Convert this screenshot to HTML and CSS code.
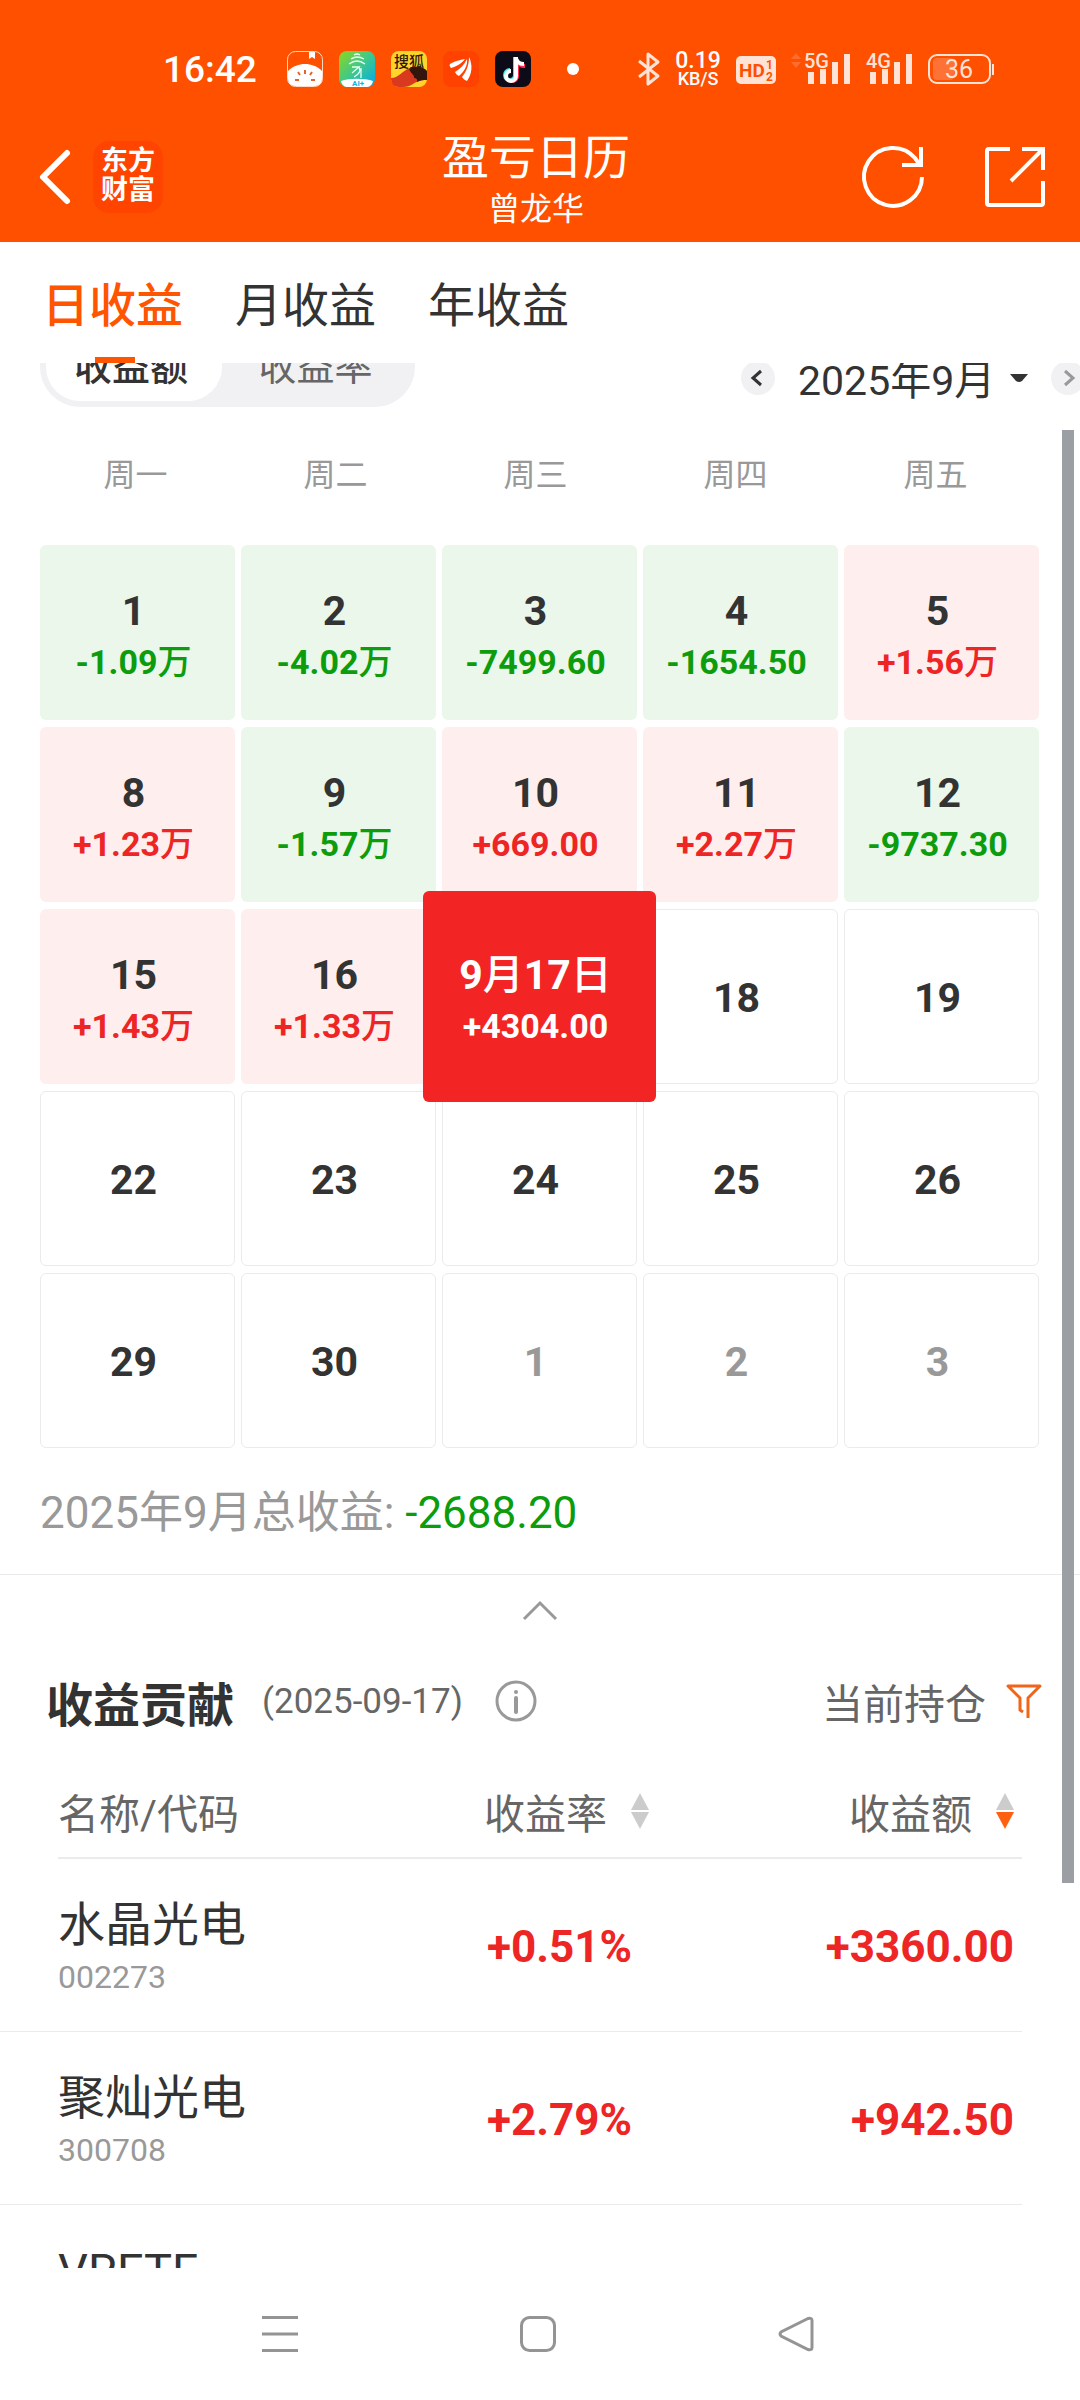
FILE: index.html
```html
<!DOCTYPE html>
<html lang="zh-CN">
<head>
    <meta charset="UTF-8">
    <meta name="viewport" content="width=device-width, initial-scale=1.0">
    <title>盈亏日历</title>
    <link rel="stylesheet" href="styles.css">
</head>
<body>
    <!-- Status Bar -->
    <div class="status-bar">
        <div class="status-left">
            <span class="clock">16:42</span>
            <svg class="app-icon" viewBox="0 0 36 36">
                <rect x="0.5" y="0.5" width="35" height="35" rx="8" fill="#ff5000" stroke="#ffd9c8"/>
                <path d="M22 1h6v7l-3-2-3 2z" fill="#fff"/>
                <path d="M1 20C6 15 12 13 18 13s12 2 17 7v8a7 7 0 0 1-7 7H8a7 7 0 0 1-7-7z" fill="#fff"/>
                <path d="M18 19v4M11 21l2 3M25 21l-2 3M8 29h4M24 29h4" stroke="#e8622c" stroke-width="2" fill="none"/>
            </svg>
            <svg class="app-icon" viewBox="0 0 36 36">
                <defs>
                    <linearGradient id="leaf" x1="0" y1="0" x2="1" y2="1">
                        <stop offset="0" stop-color="#8ed61c"/>
                        <stop offset="0.5" stop-color="#3ec88c"/>
                        <stop offset="1" stop-color="#00a8f0"/>
                    </linearGradient>
                </defs>
                <rect width="36" height="36" rx="8" fill="url(#leaf)"/>
                <path d="M2 30c8-3 24-3 32 0-1 4-3 6-7 6H9c-4 0-6-2-7-6z" fill="#fff"/>
                <path d="M15 4q3-2 6 0M12 8q6-4 13 0M10 13q8-6 16 0M13 16h7l-7 6M20 16q3 6-5 10M22 17v10" stroke="#e9fff5" stroke-width="1.3" fill="none"/>
                <text x="13" y="35" class="tiny-ai">AI+</text>
            </svg>
            <svg class="app-icon" viewBox="0 0 36 36">
                <rect width="36" height="36" rx="8" fill="#ffd52b"/>
                <path d="M0 27c8 0 12-8 19-10 9-2 16 1 17 4v7c-6 2-10 2-14 5-3 2-6 3-10 3H8c-5 0-8-3-8-9z" fill="#d8391f"/>
                <path d="M18 18c7-4 15-2 18 2v9c-4 0-7 0-10 2 1-3-1-4-3-4 1-3-3-4-5-9z" fill="#32150c"/>
                <text x="3" y="16" class="tiny-sohu">搜狐</text>
            </svg>
            <svg class="app-icon" viewBox="0 0 36 36">
                <rect width="36" height="36" rx="8" fill="#ff4200"/>
                <path d="M7 13c5-3 10-4 15-5-3 4-7 7-14 9-1-1-2-3-1-4zM12 21c5-3 9-7 12-13 1 6-3 13-8 17-2-1-3-2-4-4zM19 26c4-5 7-11 7-20 4 8 3 17-2 24-2-1-4-2-5-4z" fill="#fff"/>
            </svg>
            <svg class="app-icon" viewBox="0 0 36 36">
                <rect width="36" height="36" rx="8" fill="#0d0b18"/>
                <path d="M20 6v18a5 5 0 1 1-5-5" stroke="#25f4ee" stroke-width="4" fill="none"/>
                <path d="M22 8v18a5 5 0 0 1-8 3M22 9q2 6 8 6" stroke="#fe2c55" stroke-width="4" fill="none"/>
                <path d="M21 6v19a5 5 0 1 1-5-5M21 7q1 6 8 6" stroke="#fff" stroke-width="4" fill="none"/>
            </svg>
            <span class="dot"></span>
        </div>
        <div class="status-right">
            <svg width="22" height="36" viewBox="0 0 22 36">
                <path d="M1 10l19 15-10 8V3l10 8L1 26" fill="none" stroke="#ffe3d6" stroke-width="3" stroke-linejoin="round"/>
            </svg>
            <div class="net-speed"><span>0.19</span><small>KB/S</small></div>
            <svg width="40" height="36" viewBox="0 0 40 36">
                <rect y="5" width="40" height="28" rx="5" fill="#ffe3d6"/>
                <text x="3" y="26" class="hd-text">HD</text>
                <text x="30" y="18" class="hd-num">1</text>
                <text x="30" y="30" class="hd-num">2</text>
            </svg>
            <svg width="60" height="36" viewBox="0 0 60 36">
                <path d="M0 8l5-6 5 6zM0 11l5 6 5-6z" fill="#ff6e30"/>
                <text x="13" y="17" class="sig-text">5G</text>
                <path d="M17 21h6v12h-6zM29 18h6v15h-6zM41 11h6v22h-6zM53 3h6v30h-6z" fill="#ffe3d6"/>
            </svg>
            <svg width="47" height="36" viewBox="0 0 47 36">
                <text x="0" y="17" class="sig-text">4G</text>
                <path d="M4 21h6v12H4zM16 18h6v15h-6zM28 11h6v22h-6zM40 3h6v30h-6z" fill="#ffe3d6"/>
            </svg>
            <svg width="67" height="36" viewBox="0 0 67 36">
                <rect x="5" y="7" width="21" height="22" rx="4" fill="#ff7236"/>
                <rect x="1" y="4" width="61" height="28" rx="8" fill="none" stroke="#ffe3d6" stroke-width="2"/>
                <path d="M65 13v11" stroke="#ffe3d6" stroke-width="2"/>
                <text x="31" y="27" text-anchor="middle" class="bat-text">36</text>
            </svg>
        </div>
    </div>

    <!-- Top Header -->
    <header class="top-header">
        <div class="header-left">
            <button class="icon-btn" aria-label="返回">
                <svg width="32" height="56" viewBox="0 0 32 56"><path d="M28 4L4 28l24 24" fill="none" stroke="#fff" stroke-width="6" stroke-linecap="round" stroke-linejoin="round"/></svg>
            </button>
            <a href="#" class="brand">东方<br>财富</a>
        </div>
        <div class="header-title">
            <h1>盈亏日历</h1>
            <p>曾龙华</p>
        </div>
        <div class="header-right">
            <button class="icon-btn" aria-label="刷新">
                <svg width="64" height="64" viewBox="0 0 64 64" fill="none" stroke="#fff" stroke-width="4">
                    <path d="M61 32a29 29 0 1 1-7-19l5 7"/>
                    <path d="M60 2v18H41"/>
                </svg>
            </button>
            <button class="icon-btn" aria-label="分享">
                <svg width="60" height="60" viewBox="0 0 60 60" fill="none" stroke="#fff" stroke-width="4">
                    <path d="M25 2H4a2 2 0 0 0-2 2v52a2 2 0 0 0 2 2h52a2 2 0 0 0 2-2V34"/>
                    <path d="M37 2h21v21M57 3L26 34"/>
                </svg>
            </button>
        </div>
    </header>

    <!-- Period Tabs -->
    <nav class="tabs">
        <a href="#day" class="tab active">日收益</a>
        <a href="#month" class="tab">月收益</a>
        <a href="#year" class="tab">年收益</a>
    </nav>

    <!-- Scrolling Content -->
    <main class="content">
        <div class="scroll-thumb"></div>

        <div class="toolbar">
            <div class="segment">
                <button class="segment-btn active">收益额</button>
                <button class="segment-btn">收益率</button>
            </div>
            <div class="month-nav">
                <button class="round-btn" aria-label="上个月">
                    <svg width="34" height="34" viewBox="0 0 34 34"><path d="M20 10l-8 7 8 7" fill="none" stroke="#333" stroke-width="3"/></svg>
                </button>
                <label class="month-pick">
                    <select aria-label="月份">
                        <option>2025年9月</option>
                    </select>
                    <svg width="18" height="10" viewBox="0 0 18 10"><path d="M0 1h18l-6 7q-3 2-6 0z" fill="#333"/></svg>
                </label>
                <button class="round-btn" aria-label="下个月">
                    <svg width="34" height="34" viewBox="0 0 34 34"><path d="M14 10l8 7-8 7" fill="none" stroke="#999" stroke-width="3"/></svg>
                </button>
            </div>
        </div>

        <!-- Calendar -->
        <section class="calendar">
            <div class="weekdays">
                <span>周一</span><span>周二</span><span>周三</span><span>周四</span><span>周五</span>
            </div>
            <div class="days">
                <button class="day loss"><b>1</b><span>-1.09<i>万</i></span></button>
                <button class="day loss"><b>2</b><span>-4.02<i>万</i></span></button>
                <button class="day loss"><b>3</b><span>-7499.60</span></button>
                <button class="day loss"><b>4</b><span>-1654.50</span></button>
                <button class="day gain"><b>5</b><span>+1.56<i>万</i></span></button>

                <button class="day gain"><b>8</b><span>+1.23<i>万</i></span></button>
                <button class="day loss"><b>9</b><span>-1.57<i>万</i></span></button>
                <button class="day gain"><b>10</b><span>+669.00</span></button>
                <button class="day gain"><b>11</b><span>+2.27<i>万</i></span></button>
                <button class="day loss"><b>12</b><span>-9737.30</span></button>

                <button class="day gain"><b>15</b><span>+1.43<i>万</i></span></button>
                <button class="day gain"><b>16</b><span>+1.33<i>万</i></span></button>
                <button class="day selected"><b>9<i>月</i>17<i>日</i></b><span>+4304.00</span></button>
                <button class="day"><b>18</b></button>
                <button class="day"><b>19</b></button>

                <button class="day"><b>22</b></button>
                <button class="day"><b>23</b></button>
                <button class="day"><b>24</b></button>
                <button class="day"><b>25</b></button>
                <button class="day"><b>26</b></button>

                <button class="day"><b>29</b></button>
                <button class="day"><b>30</b></button>
                <button class="day other"><b>1</b></button>
                <button class="day other"><b>2</b></button>
                <button class="day other"><b>3</b></button>
            </div>
            <p class="total">2025年9月总收益: <span>-2688.20</span></p>
        </section>

        <button class="collapse" aria-label="收起">
            <svg width="36" height="20" viewBox="0 0 36 20"><path d="M2 18L18 2l16 16" fill="none" stroke="#999" stroke-width="3"/></svg>
        </button>

        <!-- Contribution List -->
        <section class="contrib">
            <div class="contrib-head">
                <h2>收益贡献</h2>
                <span class="date">(2025-09-17)</span>
                <button class="icon-btn" aria-label="说明">
                    <svg width="42" height="42" viewBox="0 0 42 42">
                        <circle cx="21" cy="21" r="19" fill="none" stroke="#999" stroke-width="3"/>
                        <circle cx="21" cy="12" r="2" fill="#999"/>
                        <path d="M21 18v14" stroke="#999" stroke-width="4" stroke-linecap="round"/>
                    </svg>
                </button>
                <button class="filter">当前持仓
                    <svg width="36" height="36" viewBox="0 0 36 36"><path d="M17 29l-3-2V15L2 3h32L22 15v20" fill="none" stroke="#f26419" stroke-width="3" stroke-linejoin="round"/></svg>
                </button>
            </div>
            <table>
                <thead>
                    <tr>
                        <th>名称/代码</th>
                        <th>
                            <button class="sort">收益率
                                <svg width="18" height="36" viewBox="0 0 18 36"><path d="M9 0l9 17H0z" fill="#ccc"/><path d="M9 36l9-17H0z" fill="#ccc"/></svg>
                            </button>
                        </th>
                        <th>
                            <button class="sort">收益额
                                <svg width="18" height="36" viewBox="0 0 18 36"><path d="M9 0l9 17H0z" fill="#ccc"/><path d="M9 36l9-17H0z" fill="#ff6010"/></svg>
                            </button>
                        </th>
                    </tr>
                </thead>
                <tbody>
                    <tr>
                        <td><div class="name">水晶光电</div><div class="code">002273</div></td>
                        <td>+0.51%</td>
                        <td>+3360.00</td>
                    </tr>
                    <tr>
                        <td><div class="name">聚灿光电</div><div class="code">300708</div></td>
                        <td>+2.79%</td>
                        <td>+942.50</td>
                    </tr>
                    <tr>
                        <td><div class="name">VRETF</div></td>
                        <td></td>
                        <td></td>
                    </tr>
                </tbody>
            </table>
        </section>
    </main>

    <!-- System Navigation -->
    <footer class="system-nav">
        <button class="icon-btn" aria-label="菜单">
            <svg width="36" height="36" viewBox="0 0 36 36"><path d="M0 1.5h36M0 18h36M0 34.5h36" stroke="#949494" stroke-width="3"/></svg>
        </button>
        <button class="icon-btn" aria-label="主页">
            <svg width="36" height="36" viewBox="0 0 36 36"><rect x="1.5" y="1.5" width="33" height="33" rx="8" fill="none" stroke="#949494" stroke-width="3"/></svg>
        </button>
        <button class="icon-btn" aria-label="后退">
            <svg width="36" height="36" viewBox="0 0 36 36"><path d="M30 2.500L3 16q-2 2 0 4l27 13.500q4 1 4-2v-27q0-3-4-2z" fill="none" stroke="#949494" stroke-width="3"/></svg>
        </button>
    </footer>
</body>
</html>
```

FILE: styles.css
```css
/* Global Styles */
* {
    box-sizing: border-box;
}

body {
    font-family: Roboto, 'Noto Sans CJK SC', sans-serif;
    margin: 0;
    height: 100vh;
    display: flex;
    flex-direction: column;
    background-color: #fff;
    color: #333;
    overflow: hidden;
}

h1, h2, p {
    margin: 0;
    font-weight: 400;
}

a {
    text-decoration: none;
}

button, select {
    font: inherit;
    color: inherit;
    border: none;
    background: none;
    padding: 0;
    cursor: pointer;
}

svg {
    display: block;
    flex: none;
    overflow: visible;
}

.icon-btn {
    display: flex;
}

/* Status Bar */
.status-bar {
    display: flex;
    justify-content: space-between;
    padding: 51px 85px 25px 163px;
    background-color: #ff5000;
    color: #fff;
}

.status-left, .status-right {
    display: flex;
    align-items: center;
    height: 36px;
}

.status-left {
    gap: 16px;
}

.status-right {
    gap: 15px;
}

.clock {
    font-size: 37px;
    font-weight: 500;
    margin-right: 14px;
}

.app-icon {
    width: 36px;
    height: 36px;
}

.dot {
    width: 12px;
    height: 12px;
    margin-left: 20px;
    border-radius: 50%;
    background-color: #fff;
}

.net-speed {
    width: 46px;
    text-align: center;
    font-weight: 500;
}

.net-speed span, .net-speed small {
    display: block;
    font-size: 23px;
    line-height: 20px;
}

.net-speed small {
    font-size: 18px;
    line-height: 16px;
}

.tiny-ai {
    font-size: 8px;
    font-weight: 700;
    fill: #18b0d8;
}

.tiny-sohu {
    font-size: 15px;
    font-weight: 500;
    fill: #32150c;
}

.hd-text {
    font-size: 19px;
    font-weight: 700;
    fill: #ff5000;
}

.hd-num {
    font-size: 12px;
    font-weight: 700;
    fill: #ff5000;
}

.sig-text {
    font-size: 20px;
    font-weight: 500;
    fill: #ffe3d6;
}

.bat-text {
    font-size: 25px;
    fill: #ffe3d6;
}

/* Top Header */
.top-header {
    display: grid;
    grid-template-columns: 1fr auto 1fr;
    align-items: center;
    height: 130px;
    padding: 0 35px 0 39px;
    background-color: #ff5000;
    color: #fff;
}

.header-left, .header-right {
    display: flex;
    align-items: center;
}

.header-left {
    gap: 22px;
}

.header-right {
    justify-content: flex-end;
    gap: 60px;
}

.brand {
    padding: 6px 8px 8px;
    border-radius: 16px;
    background-color: #ff4400;
    color: #fff;
    font-size: 27px;
    font-weight: 700;
    line-height: 29px;
}

.header-title {
    padding: 12px 12px 0 0;
    text-align: center;
}

.header-title h1 {
    font-size: 47px;
    line-height: 52px;
}

.header-title p {
    font-size: 32px;
    line-height: 50px;
}

/* Tabs */
.tabs {
    display: flex;
    gap: 52px;
    height: 121px;
    padding-left: 42px;
}

.tab {
    position: relative;
    color: #333;
    font-size: 47px;
    line-height: 128px;
}

.tab.active {
    color: #ff5500;
    font-weight: 500;
}

.tab.active::after {
    content: "";
    position: absolute;
    left: 50%;
    bottom: 0;
    width: 40px;
    height: 6px;
    margin-left: -18px;
    background-color: #ff5500;
}

/* Scrolling Content */
.content {
    position: relative;
    flex: 1;
    min-height: 0;
    overflow: hidden;
}

.scroll-thumb {
    position: absolute;
    top: 67px;
    right: 6px;
    width: 12px;
    height: calc(100% - 452px);
    background-color: #9b9fa3;
}

/* Segment and month picker */
.toolbar {
    display: flex;
    justify-content: space-between;
    align-items: flex-end;
    margin-top: -36px;
    padding: 0 40px;
}

.segment {
    display: flex;
    padding: 6px;
    border-radius: 40px;
    background-color: #f1f1f4;
}

.segment-btn {
    width: 176px;
    padding-right: 6px;
    border-radius: 34px;
    color: #666;
    font-size: 38px;
    line-height: 68px;
}

.segment-btn.active {
    background-color: #fff;
    color: #333;
    font-weight: 500;
}

.segment-btn + .segment-btn {
    width: 187px;
    padding: 0;
}

.month-nav {
    display: flex;
    align-items: center;
    gap: 23px;
    height: 58px;
    margin-right: -45px;
}

.round-btn {
    border-radius: 50%;
    background-color: #f1f1f4;
}

.month-pick {
    display: flex;
    align-items: center;
    gap: 14px;
}

.month-pick select {
    appearance: none;
    padding-top: 5px;
    font-size: 41px;
    line-height: 58px;
}

/* Calendar */
.calendar {
    padding: 46px 41px 31px 40px;
    border-bottom: 1px solid #eaeaea;
}

.weekdays, .days {
    display: grid;
    grid-template-columns: repeat(5, 1fr);
    column-gap: 6px;
}

.weekdays {
    margin: 0 5px 48px 0;
    color: #999;
    font-size: 32px;
    line-height: 44px;
    text-align: center;
}

.weekdays span {
    padding-right: 3px;
}

.days {
    row-gap: 7px;
}

.day {
    display: flex;
    flex-direction: column;
    align-items: center;
    justify-content: center;
    height: 175px;
    padding: 2px 8px 0 0;
    border: 1px solid #ebebeb;
    border-radius: 6px;
}

.day b {
    font-size: 41px;
    font-weight: 700;
    line-height: 52px;
}

.day span {
    font-size: 34px;
    font-weight: 700;
    line-height: 50px;
}

.day i {
    font-style: normal;
    font-weight: 500;
}

.loss, .gain {
    padding-top: 6px;
    border: none;
}

.loss {
    background-color: #ebf7eb;
}

.loss span {
    color: #0c9c0c;
}

.gain {
    background-color: #ffeeee;
}

.gain span {
    color: #ee2525;
}

.other {
    color: #999;
}

/* The picked day grows over its neighbours */
.selected {
    position: relative;
    height: 211px;
    margin: -18px -19px;
    padding-top: 6px;
    border: none;
    background-color: #f32424;
    color: #fff;
}

.total {
    margin-top: 35px;
    color: #999;
    font-size: 44px;
    line-height: 60px;
}

.total span {
    color: #0c9c0c;
}

.collapse {
    display: flex;
    align-items: center;
    justify-content: center;
    width: 100%;
    height: 72px;
}

/* Contribution List */
.contrib {
    padding-top: 24px;
}

.contrib-head {
    display: flex;
    align-items: center;
    height: 60px;
    margin-bottom: 38px;
    padding: 0 38px 0 46px;
}

.contrib-head h2 {
    font-size: 47px;
    font-weight: 700;
}

.date {
    margin: 0 32px 0 28px;
    color: #666;
    font-size: 35px;
}

.filter, .sort {
    display: flex;
    align-items: center;
    color: #666;
    font-size: 41px;
}

.filter {
    gap: 20px;
    margin-left: auto;
}

.sort {
    gap: 24px;
}

table {
    width: calc(100% - 58px);
    border-collapse: separate;
    border-spacing: 0;
    table-layout: fixed;
}

th {
    position: relative;
    height: 90px;
    padding: 0 0 6px;
    color: #666;
    font-size: 41px;
    font-weight: 400;
    text-align: left;
}

th::after {
    content: "";
    position: absolute;
    left: 0;
    right: 0;
    bottom: 0;
    height: 2px;
    background-color: #ebebeb;
}

th:first-child {
    width: 484px;
    padding-left: 58px;
}

th:first-child::after {
    left: 58px;
}

th:last-child .sort {
    margin-left: auto;
}

td {
    height: 173px;
    padding: 4px 0 0 3px;
    border-bottom: 1px solid #ebebeb;
    color: #ee2525;
    font-size: 44px;
    font-weight: 700;
}

td:first-child {
    padding: 38px 0 0 58px;
    vertical-align: top;
    font-weight: 400;
}

th:last-child, td:last-child {
    padding-right: 8px;
    text-align: right;
}

.name {
    color: #333;
    font-size: 47px;
    line-height: 56px;
}

.code {
    color: #999;
    font-size: 32px;
    line-height: 48px;
}

/* System Navigation */
.system-nav {
    display: flex;
    justify-content: center;
    gap: 222px;
    height: 132px;
    padding: 48px 4px 0 0;
    background-color: #fff;
}
```
